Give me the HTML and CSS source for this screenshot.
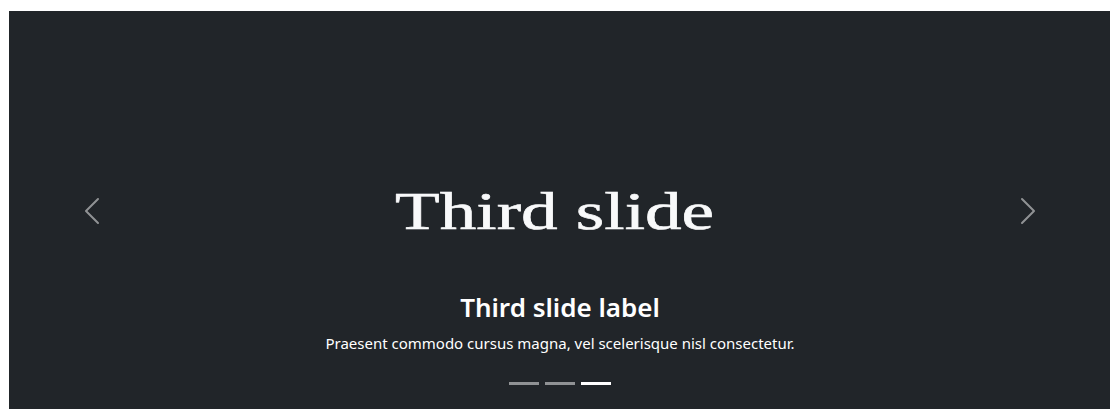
FILE: index.html
```html
<!DOCTYPE html>
<html lang="en">
<head>
<meta charset="utf-8">
<title>Carousel</title>
<link rel="stylesheet" href="styles.css">
</head>
<body>
<div class="page">
  <div class="carousel">
    <div class="slide">
      <span class="slide-title">Third slide</span>
    </div>
    <button class="control control-prev" aria-label="Previous">
      <svg viewBox="0 0 16 16" width="32" height="32" fill="#fff"><path d="M11.354 1.646a.5.5 0 0 1 0 .708L5.707 8l5.647 5.646a.5.5 0 0 1-.708.708l-6-6a.5.5 0 0 1 0-.708l6-6a.5.5 0 0 1 .708 0z"/></svg>
    </button>
    <button class="control control-next" aria-label="Next">
      <svg viewBox="0 0 16 16" width="32" height="32" fill="#fff"><path d="M4.646 1.646a.5.5 0 0 1 .708 0l6 6a.5.5 0 0 1 0 .708l-6 6a.5.5 0 0 1-.708-.708L10.293 8 4.646 2.354a.5.5 0 0 1 0-.708z"/></svg>
    </button>
    <div class="caption">
      <h5 class="caption-title">Third slide label</h5>
      <p class="caption-text">Praesent commodo cursus magna, vel scelerisque nisl consectetur.</p>
    </div>
    <div class="indicators">
      <button class="indicator"></button>
      <button class="indicator"></button>
      <button class="indicator active"></button>
    </div>
  </div>
</div>
</body>
</html>
```

FILE: styles.css
```css
html, body {
  margin: 0;
  padding: 0;
  overflow: hidden;
  background: #fff;
}

.page {
  padding: 11px 0 0 9px;
}

.carousel {
  position: relative;
  width: 1102px;
  height: 400px;
  background: #212529;
  overflow: hidden;
}

.slide {
  height: 100%;
  display: flex;
  align-items: center;
  justify-content: center;
  padding-right: 10px;
  box-sizing: border-box;
}

.slide-title {
  font-family: "Liberation Serif", "Times New Roman", serif;
  font-size: 53px;
  color: #f8f9fa;
  transform: scaleX(1.38);
  -webkit-text-stroke: 0.6px #f8f9fa;
  display: inline-block;
  line-height: 1;
}

.control {
  position: absolute;
  top: 0;
  bottom: 0;
  width: 15%;
  display: flex;
  align-items: center;
  justify-content: center;
  background: none;
  border: 0;
  padding: 0;
  opacity: 0.5;
}

.control-prev { left: 0; }
.control-next { right: 0; }

.caption {
  position: absolute;
  left: 15%;
  right: 15%;
  bottom: 20px;
  padding: 20px 0;
  text-align: center;
  color: #fff;
  font-family: "Noto Sans", "Open Sans", sans-serif;
}

.caption-title {
  margin: 0 0 8px;
  font-size: 26px;
  font-weight: 600;
  line-height: 1.2;
}

.caption-text {
  margin: 0 0 16px;
  font-size: 15px;
  line-height: 24px;
}

.indicators {
  position: absolute;
  left: 0;
  right: 0;
  bottom: 0;
  margin-bottom: 16px;
  display: flex;
  justify-content: center;
}

.indicator {
  box-sizing: content-box;
  width: 30px;
  height: 3px;
  margin: 0 3px;
  padding: 0;
  border: 0;
  border-top: 10px solid transparent;
  border-bottom: 10px solid transparent;
  background-color: #fff;
  background-clip: padding-box;
  opacity: 0.5;
}

.indicator.active {
  opacity: 1;
}
```
